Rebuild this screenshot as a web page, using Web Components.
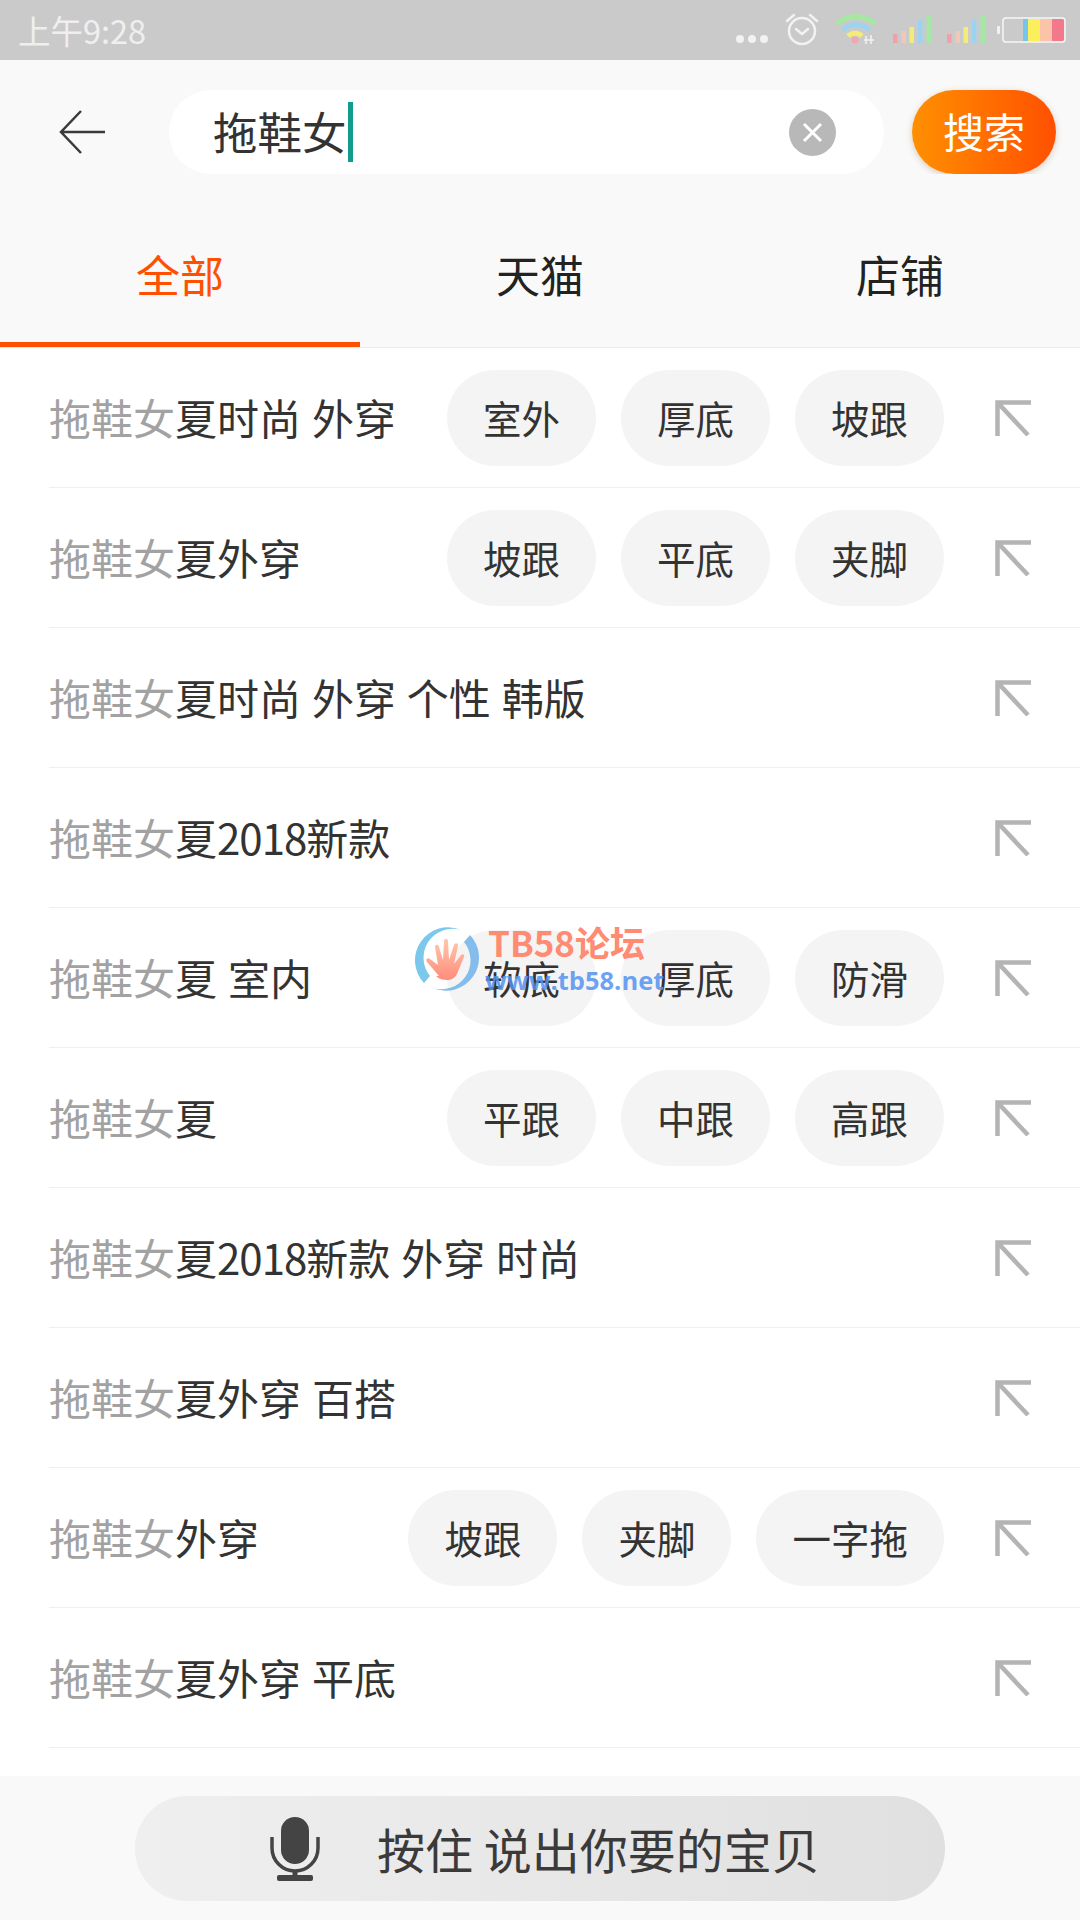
<!DOCTYPE html>
<html lang="zh">
<head>
<meta charset="utf-8">
<title>搜索</title>
<style>
  html, body { margin: 0; padding: 0; background: #fff; }
  body {
    width: 1080px;
    height: 1920px;
    overflow: hidden;
    position: relative;
    font-family: "Noto Sans CJK SC", "Noto Sans", sans-serif;
  }
</style>
</head>
<body>
<search-app>
  <status-bar></status-bar>
  <search-header query="拖鞋女"></search-header>
  <tab-bar></tab-bar>
  <suggest-list>
    <suggest-row rest="夏时尚 外穿"><tag-chip>室外</tag-chip><tag-chip>厚底</tag-chip><tag-chip>坡跟</tag-chip></suggest-row>
    <suggest-row rest="夏外穿"><tag-chip>坡跟</tag-chip><tag-chip>平底</tag-chip><tag-chip>夹脚</tag-chip></suggest-row>
    <suggest-row rest="夏时尚 外穿 个性 韩版"></suggest-row>
    <suggest-row rest="夏2018新款"></suggest-row>
    <suggest-row rest="夏 室内"><tag-chip>软底</tag-chip><tag-chip>厚底</tag-chip><tag-chip>防滑</tag-chip></suggest-row>
    <suggest-row rest="夏"><tag-chip>平跟</tag-chip><tag-chip>中跟</tag-chip><tag-chip>高跟</tag-chip></suggest-row>
    <suggest-row rest="夏2018新款 外穿 时尚"></suggest-row>
    <suggest-row rest="夏外穿 百搭"></suggest-row>
    <suggest-row rest="外穿"><tag-chip>坡跟</tag-chip><tag-chip>夹脚</tag-chip><tag-chip>一字拖</tag-chip></suggest-row>
    <suggest-row rest="夏外穿 平底"></suggest-row>
  </suggest-list>
  <voice-bar></voice-bar>
</search-app>
<forum-mark></forum-mark>

<script>
const CJK = '"Noto Sans CJK SC", "Noto Sans", sans-serif';

class SearchApp extends HTMLElement {
  connectedCallback() {
    this.attachShadow({ mode: 'open' });
    this.shadowRoot.innerHTML = `
      <style>
        :host { display: flex; flex-direction: column; height: 1920px; background: #fff; }
      </style>
      <slot></slot>
    `;
  }
}

class StatusBar extends HTMLElement {
  connectedCallback() {
    this.attachShadow({ mode: 'open' });
    this.shadowRoot.innerHTML = `
      <style>
        :host {
          display: flex;
          align-items: center;
          justify-content: space-between;
          height: 60px;
          padding: 0 8px 0 18px;
          background: #cacaca;
          color: #efefef;
          font: 32.5px/60px ${CJK};
        }
        svg { display: block; }
      </style>
      <span>上午9:28</span>
      <svg width="336" height="60" viewBox="736 0 336 60">
        <!-- dots -->
        <g fill="#f2f2f2">
          <circle cx="740" cy="39" r="4"/><circle cx="752" cy="39" r="4"/><circle cx="764" cy="39" r="4"/>
        </g>
        <!-- alarm -->
        <g fill="none" stroke="#f2f2f2" stroke-width="2.5" stroke-linecap="round" stroke-linejoin="round">
          <circle cx="802" cy="31" r="13"/>
          <path d="M796 29l6 5 6-5"/>
          <path d="M787 21l7-6M817 21l-7-6"/>
        </g>
        <!-- wifi -->
        <g fill="none" stroke-width="5">
          <path d="M837 24a28 28 0 0 1 38 0" stroke="#a4e8a4"/>
          <path d="M843 30a19 19 0 0 1 26 0" stroke="#9cd4f0"/>
          <path d="M848 36a10 10 0 0 1 14 0" stroke="#f4ec78"/>
        </g>
        <circle cx="855" cy="40" r="3.5" fill="#f0a8ae"/>
        <path d="M866 36v8M871 35v9M864 40h10" stroke="#f2f2f2" stroke-width="1.5" fill="none"/>
        <!-- signal -->
        <g id="bars">
          <rect x="893" y="34" width="4.5" height="9" fill="#f0a0a8"/>
          <rect x="901.500" y="31" width="4.5" height="12" fill="#f0c8b8"/>
          <rect x="909.500" y="27" width="4.5" height="16" fill="#f4ec78"/>
          <rect x="918" y="20" width="4.5" height="23" fill="#9cd4f0"/>
          <rect x="926.500" y="16" width="4.5" height="27" fill="#a4e8a4"/>
        </g>
        <use href="#bars" x="54"/>
        <!-- battery -->
        <rect x="997" y="26" width="3" height="8" rx="1" fill="#f2f2f2"/>
        <rect x="1023" y="19" width="5" height="22" fill="#74c4ec"/>
        <rect x="1028" y="19" width="12" height="22" fill="#fbef5c"/>
        <rect x="1040" y="19" width="12" height="22" fill="#fbc4a8"/>
        <rect x="1052" y="19" width="12" height="22" rx="1" fill="#f4788c"/>
        <rect x="1003" y="18" width="62" height="24" rx="3" fill="none" stroke="#f6f6f6" stroke-width="1.5"/>
      </svg>
    `;
  }
}

class SearchHeader extends HTMLElement {
  connectedCallback() {
    this.attachShadow({ mode: 'open' });
    const query = this.getAttribute('query') || '';
    this.shadowRoot.innerHTML = `
      <style>
        :host {
          display: flex;
          align-items: center;
          height: 84px;
          padding: 30px 24px 0 0;
          background: #f9f9f9;
          font-family: ${CJK};
        }
        .back { width: 169px; flex: none; padding-left: 59px; box-sizing: border-box; }
        .back svg { display: block; }
        .box {
          flex: 1;
          height: 84px;
          display: flex;
          align-items: center;
          padding: 0 48px 0 44px;
          background: #fff;
          border-radius: 42px;
          color: #333;
          font-size: 44.5px;
        }
        .q { margin-bottom: 3px; }
        .cursor { width: 5px; height: 60px; margin-left: 1px; background: #119d8d; }
        .clear { margin-left: auto; width: 47px; height: 47px; display: block; }
        button {
          width: 144px;
          height: 84px;
          margin-left: 28px;
          padding: 0 0 4px;
          border: 0;
          border-radius: 42px;
          background: linear-gradient(90deg, #ff9000, #ff5000);
          box-shadow: 0 2px 6px rgba(120, 70, 20, .25);
          color: #fff;
          font: 41px ${CJK};
        }
      </style>
      <div class="back">
        <svg width="46" height="44" viewBox="0 0 46 44" fill="none" stroke="#3a3a3a" stroke-width="2.5">
          <path d="M22 1L2 22l20 21M2 22h44"/>
        </svg>
      </div>
      <div class="box">
        <span class="q">${query}</span><span class="cursor"></span>
        <svg class="clear" viewBox="0 0 47 47">
          <circle cx="23.5" cy="23.5" r="23.5" fill="#b8b8b8"/>
          <path d="M15 15l17 17M32 15L15 32" stroke="#fff" stroke-width="3" fill="none"/>
        </svg>
      </div>
      <button>搜索</button>
    `;
  }
}

class TabBar extends HTMLElement {
  connectedCallback() {
    this.attachShadow({ mode: 'open' });
    this.shadowRoot.innerHTML = `
      <style>
        :host {
          display: grid;
          grid-template-columns: repeat(3, 1fr);
          height: 174px;
          box-sizing: border-box;
          border-bottom: 1px solid #ececec;
          background: #f9f9f9;
          font: 44px ${CJK};
          color: #222;
        }
        div {
          display: flex;
          align-items: center;
          justify-content: center;
          padding-top: 27px;
        }
        .on { color: #ff5000; box-shadow: inset 0 -5px 0 #ff5000; }
      </style>
      <div class="on">全部</div>
      <div>天猫</div>
      <div>店铺</div>
    `;
  }
}

class SuggestList extends HTMLElement {
  connectedCallback() {
    this.attachShadow({ mode: 'open' });
    this.shadowRoot.innerHTML = `
      <style>
        :host { display: block; flex: 1; background: #fff; }
      </style>
      <slot></slot>
    `;
  }
}

class SuggestRow extends HTMLElement {
  connectedCallback() {
    this.attachShadow({ mode: 'open' });
    // digits sit a little tighter than the font's default in the original
    const rest = (this.getAttribute('rest') || '').replace(/\d+/g, '<span class="num">$&</span>');
    this.shadowRoot.innerHTML = `
      <style>
        :host {
          display: flex;
          align-items: center;
          height: 140px;
          box-sizing: border-box;
          margin-left: 49px;
          padding-right: 49px;
          border-bottom: 1px solid #efefef;
          font: 42px ${CJK};
          color: #333;
        }
        .label { margin-bottom: 3px; white-space: nowrap; word-spacing: 1.5px; }
        .key { color: #a2a2a2; }
        .num { letter-spacing: -1px; }
        .chips { margin-left: auto; display: flex; gap: 25px; }
        svg { display: block; flex: none; margin-left: 51px; }
      </style>
      <span class="label"><span class="key">拖鞋女</span>${rest}</span>
      <div class="chips"><slot></slot></div>
      <svg width="36" height="36" viewBox="0 0 36 36" fill="none" stroke="#b4b4b4" stroke-width="4.5">
        <path d="M36 2.5H2.5V36M2.5 2.5L33 35"/>
      </svg>
    `;
  }
}

class TagChip extends HTMLElement {
  connectedCallback() {
    this.attachShadow({ mode: 'open' });
    this.shadowRoot.innerHTML = `
      <style>
        :host {
          display: flex;
          align-items: center;
          height: 96px;
          box-sizing: border-box;
          padding: 0 36px 2px;
          border-radius: 48px;
          background: #f4f4f4;
          color: #333;
          font-size: 38.5px;
        }
      </style>
      <slot></slot>
    `;
  }
}

class VoiceBar extends HTMLElement {
  connectedCallback() {
    this.attachShadow({ mode: 'open' });
    this.shadowRoot.innerHTML = `
      <style>
        :host {
          display: flex;
          justify-content: center;
          height: 144px;
          padding-top: 20px;
          box-sizing: border-box;
          background: #f9f9f9;
        }
        .btn {
          width: 810px;
          height: 105px;
          display: flex;
          align-items: center;
          padding-left: 135px;
          box-sizing: border-box;
          border-radius: 52px;
          background: linear-gradient(90deg, #efefef, #e0e0e0);
          color: #3a3a3a;
          font: 48px ${CJK};
        }
        svg { display: block; flex: none; margin-right: 57px; }
        span { margin-bottom: 2px; }
      </style>
      <div class="btn">
        <svg width="50" height="64" viewBox="0 0 50 64">
          <rect x="11" y="0" width="28" height="47" rx="14" fill="#444"/>
          <path d="M2 20v11a23 23 0 0 0 46 0V20" fill="none" stroke="#444" stroke-width="3.5"/>
          <rect x="22.5" y="53" width="5" height="7" fill="#444"/>
          <rect x="7" y="58" width="36" height="6" rx="2" fill="#444"/>
        </svg>
        <span>按住 说出你要的宝贝</span>
      </div>
    `;
  }
}

class ForumMark extends HTMLElement {
  connectedCallback() {
    this.attachShadow({ mode: 'open' });
    this.shadowRoot.innerHTML = `
      <style>
        :host {
          position: absolute;
          left: 411px;
          top: 923px;
          display: flex;
          align-items: flex-start;
          gap: 4px;
          pointer-events: none;
        }
        svg { display: block; flex: none; }
        .t {
          display: flex;
          flex-direction: column;
          white-space: nowrap;
        }
        .a { color: #ff8b72; font: bold 35px/38px ${CJK}; margin-left: 3px; }
        .b { color: rgba(82, 146, 240, .85); font: bold 25.5px/30px "Open Sans", sans-serif; margin-top: 4px; }
      </style>
      <svg width="70" height="72" viewBox="0 0 70 72">
        <defs>
          <linearGradient id="hand" x1="0" y1="0" x2="0" y2="1">
            <stop offset="0" stop-color="#ffc8ac"/>
            <stop offset="1" stop-color="#ff8d7c"/>
          </linearGradient>
        </defs>
        <path d="M13 60A33 33 0 0 1 50 7A29 29 0 0 0 19 53Z" fill="#7cc8ec"/>
        <path d="M59 12A33 33 0 0 1 22 65A29 29 0 0 0 53 19Z" fill="#84bdec"/>
        <path transform="translate(2 2)" d="M26 51L14 37c-2-3 1-5 3-3l8 6-3-18c0-3 4-3 4 0l4 13 1-19c0-3 4-3 4 0l1 19 5-15c1-3 5-2 4 1l-4 18 7-9c2-2 4 0 3 2l-7 17c-2 4-6 6-10 6s-8-1-11-4z" fill="url(#hand)"/>
      </svg>
      <div class="t">
        <span class="a">TB58论坛</span>
        <span class="b">www.tb58.net</span>
      </div>
    `;
  }
}

customElements.define('search-app', SearchApp);
customElements.define('status-bar', StatusBar);
customElements.define('search-header', SearchHeader);
customElements.define('tab-bar', TabBar);
customElements.define('suggest-list', SuggestList);
customElements.define('suggest-row', SuggestRow);
customElements.define('tag-chip', TagChip);
customElements.define('voice-bar', VoiceBar);
customElements.define('forum-mark', ForumMark);
</script>
</body>
</html>
